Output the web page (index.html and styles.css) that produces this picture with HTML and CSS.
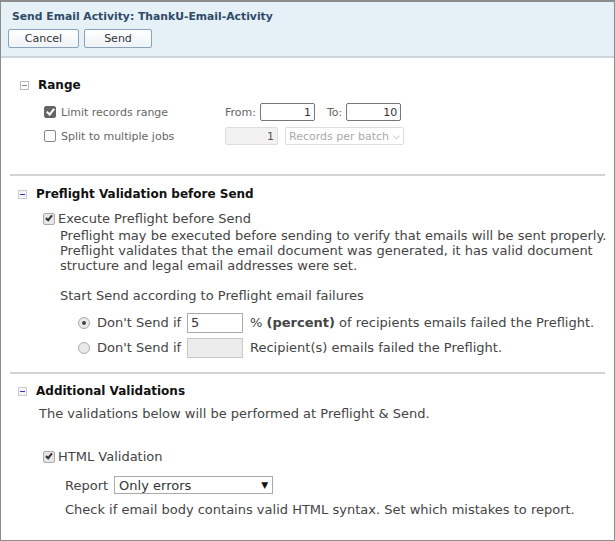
FILE: index.html
```html
<!DOCTYPE html>
<html lang="en">
<head>
    <meta charset="UTF-8">
    <title>Send Email Activity</title>
    <link rel="stylesheet" href="styles.css">
</head>
<body>
    <div class="dialog">
        <header class="dlg-head">
            <h1>Send Email Activity: ThankU-Email-Activity</h1>
            <div class="buttons">
                <button class="btn btn-cancel">Cancel</button>
                <button class="btn btn-send">Send</button>
            </div>
        </header>

        <section class="range">
            <h2 class="sec-title"><span class="toggle gray"></span>Range</h2>
            <div class="range-row">
                <label class="range-label"><span class="cb checked"></span>Limit records range</label>
                <span class="lbl">From:</span>
                <input class="num" type="text" value="1">
                <span class="lbl to">To:</span>
                <input class="num" type="text" value="10">
            </div>
            <div class="range-row">
                <label class="range-label"><span class="cb"></span>Split to multiple jobs</label>
                <input class="num jobs" type="text" value="1" disabled>
                <div class="sel-disabled">Records per batch <span class="chev">&#x2335;</span></div>
            </div>
        </section>

        <section class="preflight">
            <h2 class="sec-title"><span class="toggle blue"></span>Preflight Validation before Send</h2>
            <label class="check-line"><span class="cb small checked"></span>Execute Preflight before Send</label>
            <p class="desc">Preflight may be executed before sending to verify that emails will be sent properly.<br>
            Preflight validates that the email document was generated, it has valid document<br>
            structure and legal email addresses were set.</p>
            <p class="desc start">Start Send according to Preflight email failures</p>
            <div class="radio-row">
                <span class="radio on"></span>
                <span class="rlabel">Don't Send if</span>
                <input class="fail" type="text" value="5">
                <span>% <b>(percent)</b> of recipients emails failed the Preflight.</span>
            </div>
            <div class="radio-row">
                <span class="radio"></span>
                <span class="rlabel">Don't Send if</span>
                <input class="fail" type="text" value="" disabled>
                <span>Recipient(s) emails failed the Preflight.</span>
            </div>
        </section>

        <section class="additional">
            <h2 class="sec-title"><span class="toggle blue"></span>Additional Validations</h2>
            <p class="intro">The validations below will be performed at Preflight &amp; Send.</p>
            <label class="check-line html-check"><span class="cb small checked"></span>HTML Validation</label>
            <div class="report-row">
                <span>Report</span>
                <div class="select">Only errors <span class="arrow">&#9660;</span></div>
            </div>
            <p class="hint">Check if email body contains valid HTML syntax. Set which mistakes to report.</p>
        </section>
    </div>
</body>
</html>
```

FILE: styles.css
```css
html, body {
    margin: 0;
    padding: 0;
    background: #fff;
}

body {
    font-family: "DejaVu Sans", Verdana, sans-serif;
    color: #444;
}

.dialog {
    width: 615px;
    height: 541px;
    box-sizing: border-box;
    border: 1px solid #8c8c8c;
    border-top: 2px solid #8c8c8c;
    overflow: hidden;
}

.dlg-head {
    background: #e5f0f7;
    border-bottom: 2px solid #cfd6db;
    height: 56px;
    box-sizing: border-box;
    padding: 6px 0 0 7px;
}

.dlg-head h1 {
    margin: 0 0 0 4px;
    font-size: 10.8px;
    color: #2f4a66;
    font-weight: bold;
    height: 21px;
    line-height: 17px;
}

.buttons {
    display: flex;
    gap: 5px;
}

.btn {
    height: 19px;
    padding: 0;
    font-family: inherit;
    font-size: 11px;
    color: #333;
    background: linear-gradient(#ffffff, #eef3f7);
    border: 1px solid #8aa3ba;
    border-radius: 2px;
}

.btn-cancel { width: 71px; }
.btn-send { width: 68px; }

/* sections */

.sec-title {
    display: flex;
    align-items: center;
    margin: 0;
    font-size: 12px;
    color: #111;
    font-weight: bold;
    height: 20px;
}

.toggle {
    display: inline-block;
    width: 7px;
    height: 7px;
    border: 1px solid #bbb;
    position: relative;
    margin-right: 9px;
}

.toggle::after {
    content: "";
    position: absolute;
    left: 1px;
    right: 1px;
    top: 3px;
    height: 1px;
    background: #888;
}

.toggle.blue {
    border-color: #c9ccd4;
    background: #f4f4f7;
    margin-right: 9px;
}

.toggle.blue::after {
    background: #3333cc;
}

.range {
    margin: 0 9px;
    padding: 17px 0 26px 10px;
    border-bottom: 2px solid #d3d3d3;
    font-size: 11px;
    color: #666;
}

.range-row {
    display: flex;
    align-items: center;
    height: 24px;
}

.range-row:first-of-type {
    margin-top: 5px;
}

.range-label {
    display: flex;
    align-items: center;
    width: 181px;
    padding-left: 24px;
}

.cb {
    display: inline-block;
    width: 10px;
    height: 10px;
    border: 1px solid #888;
    border-radius: 2px;
    background: #fff;
    margin-right: 5px;
    position: relative;
}

.cb.checked {
    background: #666;
    border-color: #666;
}

.cb.checked::after {
    content: "";
    position: absolute;
    left: 3px;
    top: 0px;
    width: 3px;
    height: 6px;
    border: solid #fff;
    border-width: 0 2px 2px 0;
    transform: rotate(40deg);
}

.cb.small {
    width: 10px;
    height: 10px;
    background: #e6e6e6;
    border-color: #aaa;
    margin-right: 3px;
}

.cb.small.checked::after {
    border-color: #333;
    left: 3px;
    width: 2px;
    height: 5px;
}

.lbl {
    margin-right: 4px;
}

.lbl.to {
    margin-left: 12px;
}

.num {
    width: 55px;
    height: 18px;
    box-sizing: border-box;
    border: 1px solid #777;
    border-radius: 2px;
    text-align: right;
    font-family: inherit;
    font-size: 11px;
    color: #333;
    padding: 0 3px;
}

.num.jobs {
    width: 53px;
    border-color: #ddd;
    background: #f2f2f2;
    color: #555;
}

.sel-disabled {
    margin-left: 7px;
    width: 119px;
    height: 18px;
    box-sizing: border-box;
    border: 1px solid #ddd;
    border-radius: 2px;
    color: #aaa;
    padding: 1px 3px;
    display: flex;
    justify-content: space-between;
    align-items: center;
}

.chev {
    font-size: 9px;
    color: #888;
}

/* preflight */

.preflight {
    margin: 0 9px;
    padding: 8px 0 12px 8px;
    border-bottom: 2px solid #d3d3d3;
    font-size: 13px;
}

.check-line {
    display: flex;
    align-items: center;
    margin: 7px 0 0 25px;
    height: 15px;
}

.desc {
    margin: 2px 0 0 42px;
    line-height: 15px;
    white-space: nowrap;
}

.desc.start {
    margin-top: 15px;
}

.radio-row {
    display: flex;
    align-items: center;
    height: 25px;
    margin-left: 60px;
}

.radio-row:first-of-type {
    margin-top: 7px;
}

.radio {
    display: inline-block;
    width: 10px;
    height: 10px;
    border: 1px solid #aaa;
    border-radius: 50%;
    background: #eaeaea;
    margin-right: 7px;
    position: relative;
}

.radio.on::after {
    content: "";
    position: absolute;
    left: 3px;
    top: 3px;
    width: 4px;
    height: 4px;
    border-radius: 50%;
    background: #444;
}

.rlabel {
    width: 90px;
}

.fail {
    width: 56px;
    height: 20px;
    box-sizing: border-box;
    border: 1px solid #aaa;
    font-family: inherit;
    font-size: 13px;
    padding: 0 3px;
    color: #333;
    margin-right: 7px;
}

.fail:disabled {
    background: #ececec;
    border-color: #c8c8c8;
}

/* additional */

.additional {
    margin: 0 9px;
    padding: 7px 0 0 8px;
    font-size: 13px;
}

.intro {
    margin: 5px 0 0 21px;
    line-height: 15px;
}

.html-check {
    margin-top: 28px;
}

.report-row {
    display: flex;
    align-items: center;
    height: 18px;
    margin: 12px 0 0 47px;
    gap: 6px;
}

.select {
    width: 159px;
    height: 18px;
    box-sizing: border-box;
    border: 1px solid #aaa;
    padding: 0 4px;
    display: flex;
    justify-content: space-between;
    align-items: center;
    color: #333;
}

.arrow {
    font-size: 9px;
    color: #111;
}

.hint {
    margin: 8px 0 0 47px;
    line-height: 15px;
}
```
